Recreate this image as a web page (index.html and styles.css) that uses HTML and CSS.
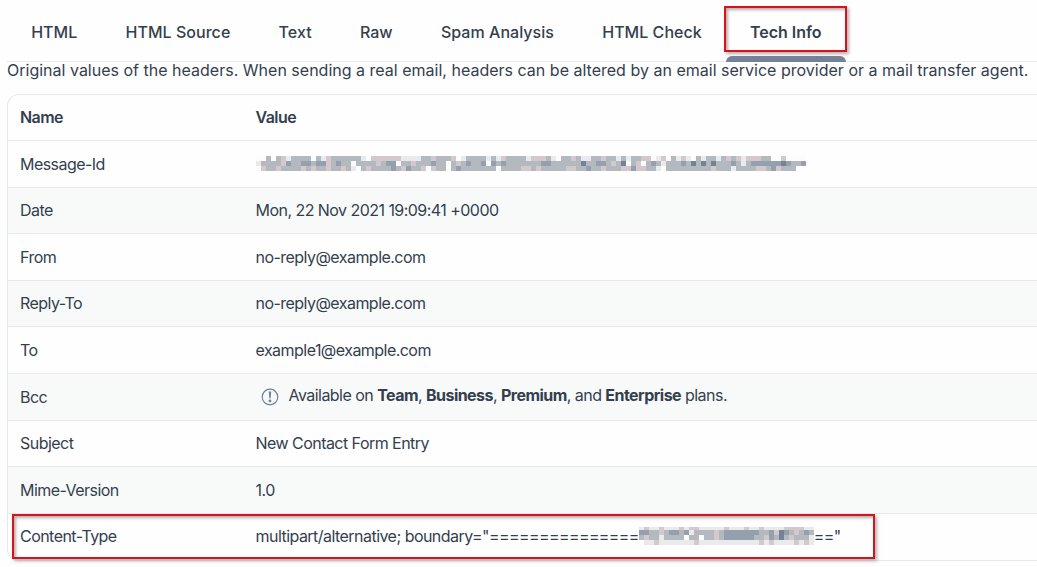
FILE: index.html
```html
<!DOCTYPE html>
<html lang="en">
<head>
<meta charset="utf-8">
<title>Tech Info</title>
<link rel="stylesheet" href="styles.css">
</head>
<body>
<nav class="tabs">
  <a class="tab"><span>HTML</span></a>
  <a class="tab"><span>HTML Source</span></a>
  <a class="tab"><span>Text</span></a>
  <a class="tab"><span>Raw</span></a>
  <a class="tab"><span>Spam Analysis</span></a>
  <a class="tab"><span>HTML Check</span></a>
  <a class="tab active"><span>Tech Info</span><i class="mark mark-tab"></i></a>
</nav>
<p class="intro"><span>Original values of the headers. When sending a real email, headers can be altered by an email service provider or a mail transfer agent.</span></p>
<main class="table">
  <div class="row head"><span>Name</span><span>Value</span></div>
  <div class="row"><span>Message-Id</span><span class="value"><svg class="mosaic" id="message-id"></svg></span></div>
  <div class="row"><span>Date</span><span class="value date">Mon, 22 Nov 2021 19:09:41 +0000</span></div>
  <div class="row"><span>From</span><span class="value">no-reply@example.com</span></div>
  <div class="row raised"><span>Reply-To</span><span class="value">no-reply@example.com</span></div>
  <div class="row"><span>To</span><span class="value">example1@example.com</span></div>
  <div class="row"><span>Bcc</span><span class="value notice"><svg class="info" viewBox="0 0 18 18"><circle cx="9" cy="9" r="7.8"/><path class="stem" d="M7.7 3.6h2.6L9.6 10.4H8.4z"/><circle class="dot" cx="9" cy="13" r="1.4"/></svg><span class="plans">Available on <b>Team</b>, <b>Business</b>, <b>Premium</b>, and <b>Enterprise</b> plans.</span></span></div>
  <div class="row"><span>Subject</span><span class="value">New Contact Form Entry</span></div>
  <div class="row"><span>Mime-Version</span><span class="value">1.0</span></div>
  <div class="row last"><span>Content-Type</span><span class="value content"><span>multipart/alternative; boundary="</span><span class="equals">===============</span><svg class="mosaic" id="boundary"></svg><span class="tail">=="</span></span><i class="mark mark-row"></i></div>
</main>
<script src="mosaic.js"></script>
</body>
</html>
```
FILE: styles.css
```css
* { box-sizing: border-box; }
body {
  margin: 0;
  width: 1037px;
  height: 567px;
  overflow: hidden;
  background: #fefefe;
  color: #343f4e;
  font: 16px/24px Inter, "Liberation Sans", sans-serif;
}
.tabs {
  display: flex;
  height: 62px;
  margin-left: 7px;
  border-bottom: 1px solid #e9ebec;
}
.tab {
  position: relative;
  padding: 20px 24.15px 0;
  font-weight: 500;
  letter-spacing: 0.03px;
  white-space: nowrap;
}
.active { height: 62px; font-weight: 600; letter-spacing: -0.03px; }
.active::after {
  content: "";
  position: absolute;
  left: 0;
  right: 0;
  bottom: 0;
  height: 6px;
  border-radius: 6px 6px 0 0;
  background: #748297;
}
.mark {
  position: absolute;
  border: 2px solid #d2171c;
  box-shadow: 2px 2px 3px #a99a9fcc, inset 2px 2px 3px #a99a9fcc;
}
.mark-tab { left: -2px; top: 6px; width: 123px; height: 46px; z-index: 1; }
.intro { margin: 0; padding: 0 0 0 7px; height: 32px; line-height: 17px; white-space: nowrap; letter-spacing: 0.008px; }
.table {
  width: 1040px;
  margin-left: 7px;
  border: 1px solid #e7e9ea;
  border-right: 0;
  border-radius: 12px 0 0 12px;
  letter-spacing: -0.54px;
}
.row {
  position: relative;
  display: grid;
  grid-template-columns: 235.5px 1fr;
  align-items: center;
  height: 46.6px;
  padding-left: 12px;
  border-bottom: 1px solid #e7e9ea;
  white-space: nowrap;
}
.row:nth-child(odd):not(.head) { background: #f8faf9; }
.row.head { height: 46px; font-weight: 600; padding-bottom: 1px; }
.raised { padding-bottom: 2px; }
.last { border-bottom: 0; padding-bottom: 2px; }
.value { display: flex; align-items: center; }
.mosaic { height: 15px; shape-rendering: crispEdges; flex: none; }
.notice { padding-left: 5px; gap: 10px; }
.info { width: 18px; height: 18px; fill: none; stroke: #748297; stroke-width: 1.2; }
.info .stem, .info .dot { fill: #748297; stroke: none; }
.plans { padding-bottom: 3px; }
.plans b { font-weight: 700; }
.equals, .tail { letter-spacing: -0.6px; }
.mark-row { left: 4px; top: 0; width: 863px; height: 45px; }
```
FILE: mosaic.js
```js
const colors = { g: '#b3b9be', p: '#d3c8cb', l: '#e9eaec', d: '#94a0ae', b: '#748297', w: '#fcfcfc' };
const patterns = {
  'message-id': [
    'wwgwgplggggwglpgggggglwppppppllllggpgggpwlgggglglpgggglpppglwggpgllggpgglglggppwlpwglplwglgglgpgplpppggwwpwwwwwwlwwww',
    'lggggpdggddgddpgdggwggggpgddwggpgggdggwgpgdggdwdgdgggggggddggggggbggddgpgbwgpwgdglgggdgbgbgbgggdglgddddddbdggdl',
    'wpggpggggpgpggpggpglwgpggggdgpdggpwpggwgdgggggggwggggppgpgggggppggdggpgggppdppgglwgggggggggpggglggggppgdpggg'
  ],
  'boundary': [
    'lpllplllplpplllllplllpllpllllppppllp',
    'ddggpgddgdlggggpgdddddddggdpbdgpgdgg',
    'gpgglggggwggwggpgddddddggpdgbgpggglg',
    'wllplllllllpllllllllllllplpllllplpll'
  ]
};
for (const [id, rows] of Object.entries(patterns)) {
  const svg = document.getElementById(id);
  const columns = id === 'boundary' ? 35 : 110;
  const cell = 5;
  const crop = id === 'boundary' ? 2 : 0;
  svg.setAttribute('width', columns * cell);
  svg.style.height = rows.length * cell - crop + 'px';
  rows.forEach((row, y) => [...row.slice(0, columns)].forEach((key, x) => {
    const r = document.createElementNS('http://www.w3.org/2000/svg', 'rect');
    const attrs = { x: x * cell, y: y * cell - crop, width: cell, height: cell, fill: colors[key] };
    for (const [name, value] of Object.entries(attrs)) r.setAttribute(name, value);
    svg.append(r);
  }));
}
```
